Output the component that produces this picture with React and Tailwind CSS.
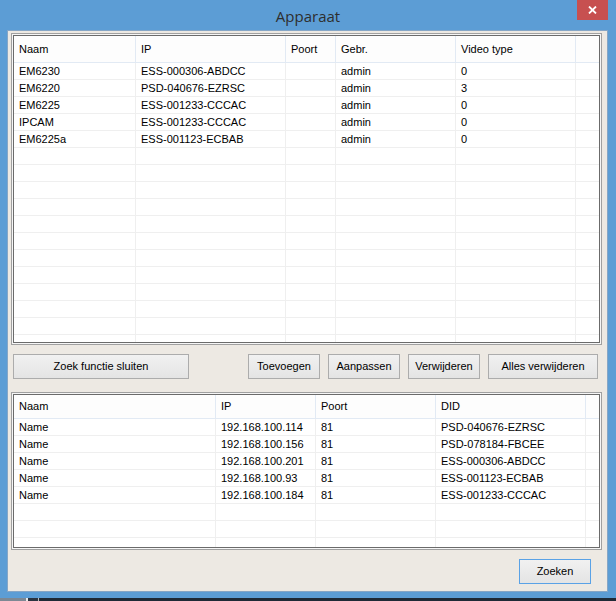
import React from "react";

const font = { fontFamily: '"Liberation Sans", Arial, sans-serif' };

const topCols = [
  { label: "Naam", w: "w-[122px]" },
  { label: "IP", w: "w-[150px]" },
  { label: "Poort", w: "w-[50px]" },
  { label: "Gebr.", w: "w-[120px]" },
  { label: "Video type", w: "w-[120px]" },
  { label: "", w: "w-[23px]", last: true },
];

const topRows = [
  ["EM6230", "ESS-000306-ABDCC", "", "admin", "0"],
  ["EM6220", "PSD-040676-EZRSC", "", "admin", "3"],
  ["EM6225", "ESS-001233-CCCAC", "", "admin", "0"],
  ["IPCAM", "ESS-001233-CCCAC", "", "admin", "0"],
  ["EM6225a", "ESS-001123-ECBAB", "", "admin", "0"],
];

const bottomCols = [
  { label: "Naam", w: "w-[202px]" },
  { label: "IP", w: "w-[100px]" },
  { label: "Poort", w: "w-[120px]" },
  { label: "DID", w: "w-[150px]" },
  { label: "", w: "w-[13px]", last: true },
];

const bottomRows = [
  ["Name", "192.168.100.114", "81", "PSD-040676-EZRSC"],
  ["Name", "192.168.100.156", "81", "PSD-078184-FBCEE"],
  ["Name", "192.168.100.201", "81", "ESS-000306-ABDCC"],
  ["Name", "192.168.100.93", "81", "ESS-001123-ECBAB"],
  ["Name", "192.168.100.184", "81", "ESS-001233-CCCAC"],
];

const ListView = ({ cols, rows, total, headerH, height }) => {
  const filled = Array.from({ length: total }, (_, i) => rows[i] || []);
  return (
    <div className={`${height} w-[591px] border border-[#a0a0a0] bg-[#f6f6f6] p-px`}>
      <div className="h-full w-full overflow-hidden border border-[#6b6b6b] bg-white">
        <div className={`flex ${headerH} border-b border-[#e2eaf4] bg-[#fdfdfd]`}>
          {cols.map((c, i) => (
            <div
              key={i}
              className={`${c.w} shrink-0 flex items-center pl-[5px] ${c.last ? "" : "border-r border-[#e2eaf4]"}`}
            >
              {c.label}
            </div>
          ))}
        </div>
        {filled.map((r, ri) => (
          <div key={ri} className="flex h-[17px] border-b border-[#efefef]">
            {cols.map((c, i) => (
              <div
                key={i}
                className={`${c.w} shrink-0 flex items-center pl-[5px] whitespace-nowrap ${c.last ? "" : "border-r border-[#efefef]"}`}
              >
                {r[i] || ""}
              </div>
            ))}
          </div>
        ))}
      </div>
    </div>
  );
};

const Btn = ({ children, w, focus }) => (
  <div
    className={`${w} h-[25px] flex items-center justify-center border ${
      focus ? "border-[#5aa2e6]" : "border-[#acacac]"
    } bg-gradient-to-b from-[#f1f1f1] to-[#e4e4e4] text-black`}
  >
    {children}
  </div>
);

export default function App() {
  return (
    <div className="w-[616px] h-[601px] bg-[#5c9dd5] flex flex-col overflow-hidden text-[11px] text-black" style={font}>
      <div className="relative h-[30px] flex justify-center items-center pt-[3px]">
        <span className="text-[15px] text-[#2e2e2e]" style={{ fontFamily: '"Open Sans", "Noto Sans", sans-serif' }}>
          Apparaat
        </span>
        <div className="absolute right-[8px] top-0 w-[31px] h-[20px] bg-[#c75050] flex items-center justify-center">
          <svg width="9" height="8" viewBox="0 0 9 8">
            <path d="M1 0.5 L8 7.5 M8 0.5 L1 7.5" stroke="#fff" strokeWidth="1.8" />
          </svg>
        </div>
      </div>

      <div className="ml-[7px] w-[601px] h-[562px] border border-[#86a6c6] bg-[#ede9e3] px-[3px] pt-[2px] flex flex-col">
        <ListView cols={topCols} rows={topRows} total={17} headerH="h-[27px]" height="h-[312px]" />

        <div className="flex mt-[9px] pl-[2px]">
          <Btn w="w-[176px]">Zoek functie sluiten</Btn>
          <div className="ml-[59px] flex gap-[8px]">
            <Btn w="w-[72px]">Toevoegen</Btn>
            <Btn w="w-[72px]">Aanpassen</Btn>
            <Btn w="w-[72px]">Verwijderen</Btn>
            <Btn w="w-[110px]">Alles verwijderen</Btn>
          </div>
        </div>

        <div className="mt-[13px]">
          <ListView cols={bottomCols} rows={bottomRows} total={8} headerH="h-[24px]" height="h-[158px]" />
        </div>

        <div className="flex justify-end mt-[9px] pr-[13px]">
          <Btn w="w-[72px]" focus>Zoeken</Btn>
        </div>
      </div>

      <div className="h-[6px]" />
      <div className="h-[3px] flex">
        <div className="w-[26px] bg-[#7d8894]" />
        <div className="w-[2px] bg-[#e8e8e8]" />
        <div className="w-[10px] bg-[#2a3440]" />
        <div className="w-[1px] bg-[#b8b8b8]" />
        <div className="flex-1 bg-[#1f2a36]" />
      </div>
    </div>
  );
}
